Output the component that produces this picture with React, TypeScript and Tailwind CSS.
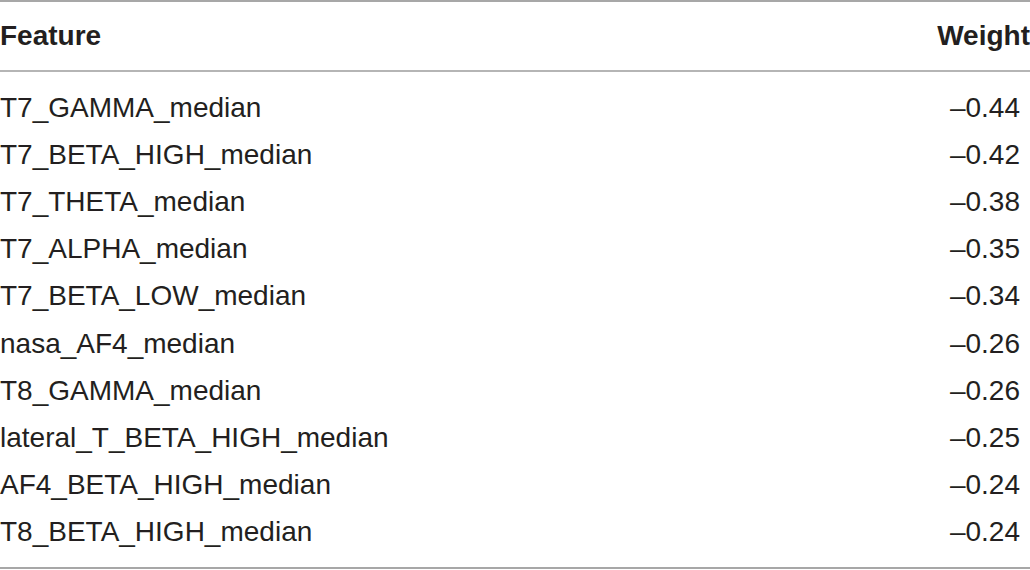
const rows: [string, string][] = [
  ['T7_GAMMA_median', '–0.44'],
  ['T7_BETA_HIGH_median', '–0.42'],
  ['T7_THETA_median', '–0.38'],
  ['T7_ALPHA_median', '–0.35'],
  ['T7_BETA_LOW_median', '–0.34'],
  ['nasa_AF4_median', '–0.26'],
  ['T8_GAMMA_median', '–0.26'],
  ['lateral_T_BETA_HIGH_median', '–0.25'],
  ['AF4_BETA_HIGH_median', '–0.24'],
  ['T8_BETA_HIGH_median', '–0.24'],
]

export default function App() {
  return (
    <div className="w-[1030px] h-[570px] bg-white text-[#231f20] font-['Liberation_Sans',Arial,sans-serif] flex flex-col">
      <div className="h-[2px] bg-[#a7a7a7]" />
      {/* header */}
      <div className="h-[68px] flex items-center justify-between text-[28px] leading-none font-bold">
        <span>Feature</span>
        <span>Weight</span>
      </div>
      <div className="h-[2px] bg-[#b5b5b5]" />
      <div className="flex flex-col pt-[12px] pb-[11px]">
        {rows.map(([feature, weight]) => (
          <div key={feature} className="h-[47.2px] flex items-center justify-between text-[28px] leading-none">
            <span>{feature}</span>
            <span className="pr-[10px]">{weight}</span>
          </div>
        ))}
      </div>
      <div className="h-[2px] bg-[#a7a7a7]" />
    </div>
  )
}
